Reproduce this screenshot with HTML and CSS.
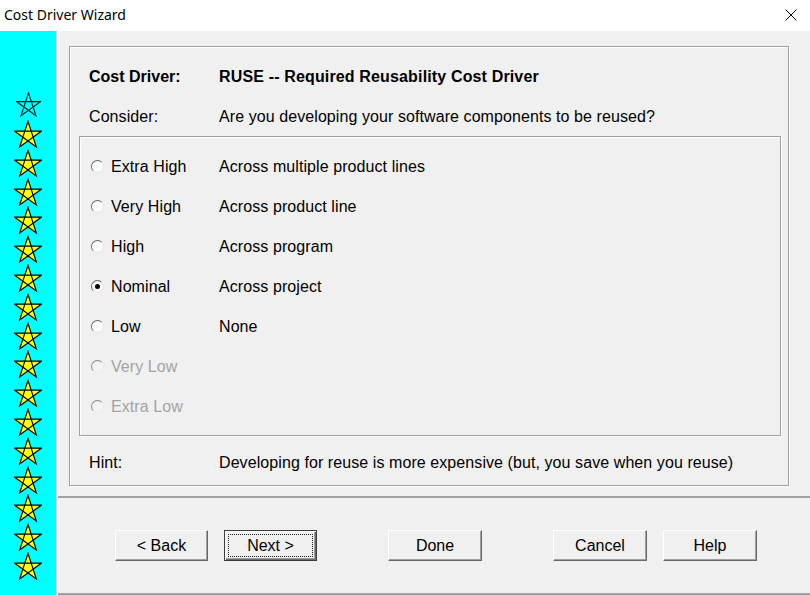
FILE: index.html
```html
<!DOCTYPE html>
<html>
<head>
<meta charset="utf-8">
<link rel="stylesheet" href="styles.css">
</head>
<body>
<svg class="defs" width="0" height="0">
  <defs>
    <symbol id="star" viewBox="0 0 28 28">
      <path d="M14 1 L22.3 26.5 L0.7 10.8 L27.3 10.8 L5.7 26.5 Z" fill="#ffff00" stroke="#000" stroke-width="1.2" stroke-linejoin="miter"/>
    </symbol>
    <symbol id="star-outline" viewBox="0 0 28 28">
      <path d="M14 1 L22.3 26.5 L0.7 10.8 L27.3 10.8 L5.7 26.5 Z" fill="none" stroke="#062020" stroke-width="1.3"/>
    </symbol>
  </defs>
</svg>
<div class="titlebar">
  <span class="title">Cost Driver Wizard</span>
  <svg class="close" width="12" height="12" viewBox="0 0 12 12"><path d="M0.5 0.5 L11.5 11.5 M11.5 0.5 L0.5 11.5" stroke="#000" stroke-width="1"/></svg>
</div>
<div class="main">
  <div class="stars">
    <svg class="star-o"><use href="#star-outline"/></svg>
    <svg class="star"><use href="#star"/></svg>
    <svg class="star"><use href="#star"/></svg>
    <svg class="star"><use href="#star"/></svg>
    <svg class="star"><use href="#star"/></svg>
    <svg class="star"><use href="#star"/></svg>
    <svg class="star"><use href="#star"/></svg>
    <svg class="star"><use href="#star"/></svg>
    <svg class="star"><use href="#star"/></svg>
    <svg class="star"><use href="#star"/></svg>
    <svg class="star"><use href="#star"/></svg>
    <svg class="star"><use href="#star"/></svg>
    <svg class="star"><use href="#star"/></svg>
    <svg class="star"><use href="#star"/></svg>
    <svg class="star"><use href="#star"/></svg>
    <svg class="star"><use href="#star"/></svg>
    <svg class="star"><use href="#star"/></svg>
  </div>
  <div class="content">
    <div class="upper">
      <div class="inner">
        <div class="row top-row bold">
          <span class="lbl">Cost Driver:</span>
          <span>RUSE -- Required Reusability Cost Driver</span>
        </div>
        <div class="row top-row">
          <span class="lbl">Consider:</span>
          <span>Are you developing your software components to be reused?</span>
        </div>
        <div class="options">
          <div class="row opt"><span class="radio"></span><span class="olbl">Extra High</span><span>Across multiple product lines</span></div>
          <div class="row opt"><span class="radio"></span><span class="olbl">Very High</span><span>Across product line</span></div>
          <div class="row opt"><span class="radio"></span><span class="olbl">High</span><span>Across program</span></div>
          <div class="row opt"><span class="radio checked"></span><span class="olbl">Nominal</span><span>Across project</span></div>
          <div class="row opt"><span class="radio"></span><span class="olbl">Low</span><span>None</span></div>
          <div class="row opt disabled"><span class="radio"></span><span class="olbl">Very Low</span><span></span></div>
          <div class="row opt disabled"><span class="radio"></span><span class="olbl">Extra Low</span><span></span></div>
        </div>
        <div class="row top-row hint">
          <span class="lbl">Hint:</span>
          <span>Developing for reuse is more expensive (but, you save when you reuse)</span>
        </div>
      </div>
    </div>
    <div class="bottom">
      <button class="btn">&lt; Back</button>
      <button class="btn default"><span class="focus">Next &gt;</span></button>
      <button class="btn wide gap-l">Done</button>
      <button class="btn wide gap-l">Cancel</button>
      <button class="btn wide">Help</button>
    </div>
  </div>
</div>
</body>
</html>
```
FILE: styles.css
```css
* { box-sizing: border-box; }
html, body { margin: 0; padding: 0; }
body {
  width: 810px;
  height: 595px;
  overflow: hidden;
  background: #f0f0f0;
  font-family: "Liberation Sans", Arial, sans-serif;
  font-size: 16px;
  color: #000;
}
.defs { position: absolute; width: 0; height: 0; }

.titlebar {
  height: 31px;
  background: #fff;
  display: flex;
  align-items: center;
  justify-content: space-between;
  padding: 0 13px 2px 4px;
}
.title {
  font-family: "Noto Sans", "Open Sans", sans-serif;
  font-size: 14px;
  color: #000;
}
.close { display: block; }

.main { display: flex; height: 564px; }

.stars {
  width: 57px;
  background: #00ffff;
  border-right: 1px solid #cfcfcf;
  display: flex;
  flex-direction: column;
  align-items: center;
  padding-top: 61px;
}
.star-o { width: 25px; height: 25px; margin-bottom: 3px; display: block; }
.star { width: 28px; height: 28.8px; display: block; }

.content {
  flex: 1;
  border-left: 1px solid #fff;
  display: flex;
  flex-direction: column;
}

.upper {
  height: 467px;
  padding: 15px 21px 10px 11px;
  border-bottom: 2px solid #a0a0a0;
}
.inner {
  height: 440px;
  border: 1px solid #a0a0a0;
  box-shadow: 1px 1px 0 #fff, inset 1px 1px 0 #fff;
  padding: 9px 7px 0 9px;
}

.row {
  display: flex;
  align-items: center;
  height: 40px;
  padding-top: 2px;
  white-space: nowrap;
  letter-spacing: 0.08px;
}
.top-row { padding-left: 10px; }
.bold { font-weight: bold; letter-spacing: 0.15px; }
.bold .lbl { letter-spacing: 0; }
.lbl { width: 130px; flex: none; }

.options {
  height: 300px;
  border: 1px solid #a0a0a0;
  box-shadow: 1px 1px 0 #fff, inset 1px 1px 0 #fff;
  padding: 9px 0 0 11px;
}
.radio {
  width: 13px;
  height: 13px;
  flex: none;
  border-radius: 50%;
  border: 1px solid;
  border-color: #6a6a6a #e4e4e4 #e4e4e4 #6a6a6a;
  background: #fbfbfb;
  margin-right: 7px;
  margin-top: -2px;
  display: flex;
  align-items: center;
  justify-content: center;
}
.radio.checked::after {
  content: "";
  width: 5px;
  height: 5px;
  border-radius: 50%;
  background: #000;
}
.olbl { width: 108px; flex: none; }
.disabled { color: #a3a3a3; }
.disabled .radio { border-color: #8a8a8a #ececec #ececec #8a8a8a; background: #f3f3f3; }

.hint { margin-top: 6px; }

.bottom {
  flex: 1;
  display: flex;
  align-items: flex-start;
  padding: 32px 0 0 57px;
  border-bottom: 2px solid #a0a0a0;
}
.btn {
  width: 93px;
  height: 31px;
  flex: none;
  margin: 0;
  padding: 0;
  background: #f0f0f0;
  border: 1px solid;
  border-color: #fff #696969 #696969 #fff;
  box-shadow: inset -1px -1px 0 #a0a0a0;
  font-family: "Liberation Sans", Arial, sans-serif;
  font-size: 16px;
  color: #000;
  display: flex;
  align-items: center;
  justify-content: center;
}
.btn + .btn { margin-left: 16px; }
.btn.wide { width: 94px; }
.btn.gap-l { margin-left: 71px; }
.btn.default {
  border: 1px solid #3c3c3c;
  box-shadow: inset 1px 1px 0 #fff, inset -1px -1px 0 #696969, inset -2px -2px 0 #a0a0a0;
  padding: 3px;
}
.focus {
  flex: 1;
  align-self: stretch;
  border: 1px dotted #222;
  display: flex;
  align-items: center;
  justify-content: center;
}
```
